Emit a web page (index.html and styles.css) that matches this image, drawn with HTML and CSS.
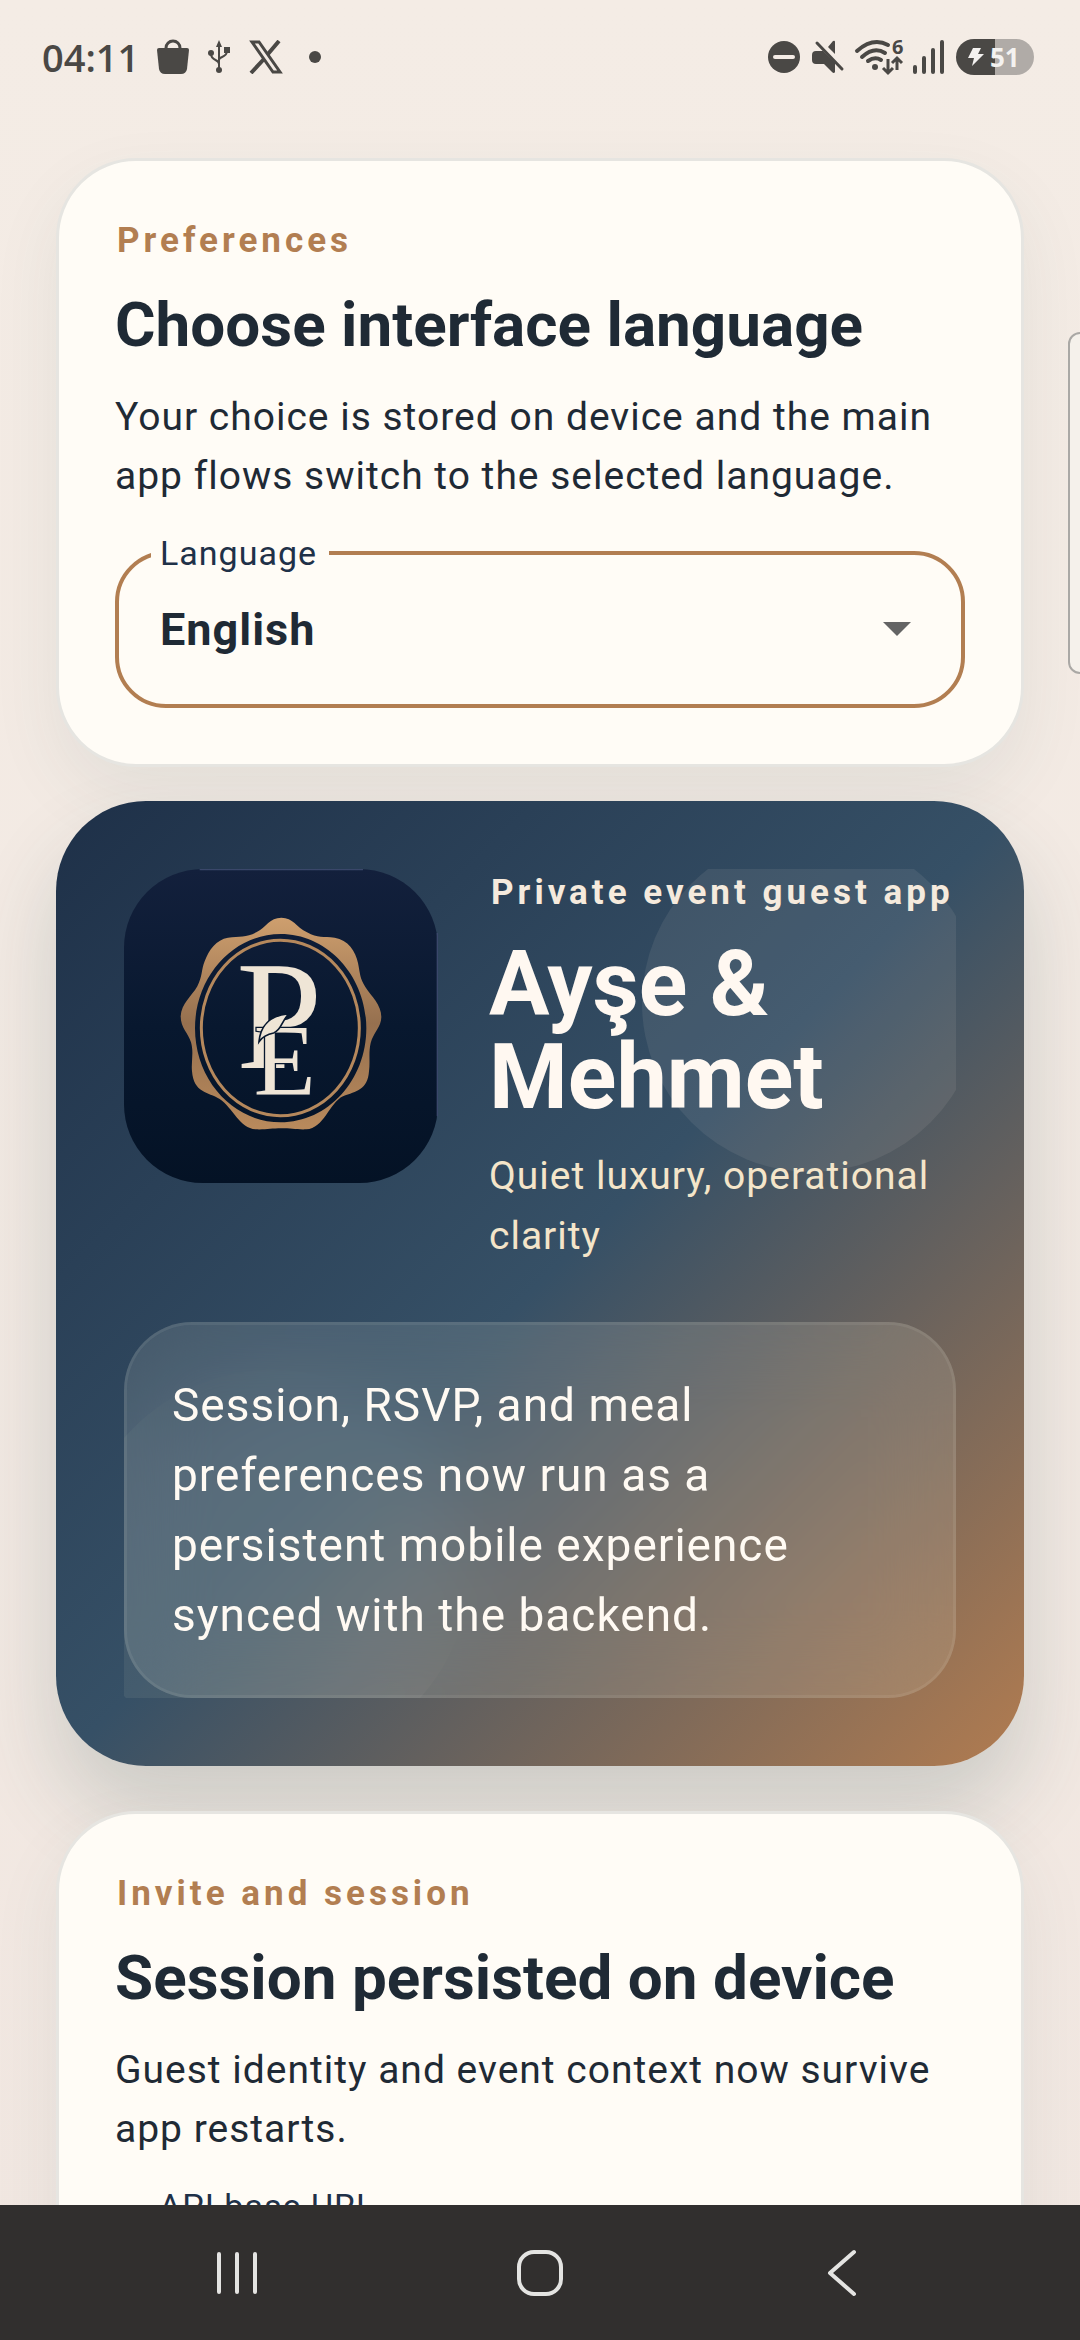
FILE: index.html
```
<!DOCTYPE html>
<html lang="en">
<head>
  <meta charset="UTF-8">
  <meta name="viewport" content="width=device-width, initial-scale=1.0">
  <title>Private event guest app</title>
  <link rel="stylesheet" href="styles.css">
</head>
<body>
  <header class="status-bar">
    <div class="status-left">
      <span class="clock">04:11</span>
      <svg class="icon-bag" width="32" height="36" viewBox="0 0 32 36">
        <path d="M0 11q0-2 2-2h28q2 0 2 2l-2 19q-1 5-6 5H8q-5 0-6-5z" fill="currentColor"/>
        <path d="M9 10V9a7 7 0 0 1 14 0v1" fill="none" stroke="currentColor" stroke-width="3"/>
      </svg>
      <svg class="icon-usb" width="24" height="34" viewBox="0 0 24 34">
        <path d="M12 30V5M12 24c0-5-8-3-8-10M12 20c0-4 8-2 8-9" fill="none" stroke="currentColor" stroke-width="2"/>
        <path d="M12 0l3 7H9zM17 7h6v6h-6z" fill="currentColor"/>
        <circle cx="4" cy="13" r="3" fill="currentColor"/>
        <circle cx="12" cy="30" r="3" fill="currentColor"/>
      </svg>
      <svg class="icon-x" width="34" height="34" viewBox="0 0 34 34" fill="none" stroke="currentColor">
        <path d="M3 2h7l21 30h-7z" stroke-width="3"/>
        <path d="M30 1L19 14M15 19L2 33" stroke-width="4"/>
      </svg>
      <span class="dot"></span>
    </div>
    <div class="status-right">
      <svg width="32" height="32" viewBox="0 0 32 32">
        <circle cx="16" cy="16" r="16" fill="currentColor"/>
        <path d="M7 16h18" stroke="#f4ebe5" stroke-width="4" stroke-linecap="round"/>
      </svg>
      <svg class="icon-mute" width="34" height="34" viewBox="0 0 34 34">
        <path d="M0 15q0-4 4-4h7l12 12v9q-1 2-3 0l-8-8H4q-4 0-4-4zM16 7l5-6q2-1 2 1v12z" fill="currentColor"/>
        <path d="M5 3l25 26" stroke="currentColor" stroke-width="3" stroke-linecap="round"/>
      </svg>
      <svg class="icon-wifi" width="48" height="36" viewBox="0 0 48 36">
        <g fill="none" stroke="currentColor" stroke-width="4" stroke-linecap="round">
          <path d="M2 12Q18-2 33 6M7 18q12-11 23-4M13 22q7-5 13-1"/>
        </g>
        <circle cx="20" cy="28" r="3" fill="currentColor"/>
        <path d="M33 20v13m-5-4l5 5 5-5M42 31V19m-5 5l5-5 5 5" fill="none" stroke="currentColor" stroke-width="3"/>
        <text class="wifi-gen" x="37" y="15">6</text>
      </svg>
      <svg class="icon-signal" width="32" height="34" viewBox="0 0 32 34">
        <path d="M2 27v5M11 18v14M20 10v22M29 2v30" stroke="currentColor" stroke-width="4" stroke-linecap="round"/>
      </svg>
      <span class="battery">
        <svg width="16" height="20" viewBox="0 0 16 20"><path d="M5 1h8l-3 6h6L4 19l2-8H0z" fill="#f4f2f0"/></svg>
        <span>51</span>
      </span>
    </div>
  </header>

  <main class="feed">
    <section class="card">
      <p class="eyebrow">Preferences</p>
      <h2>Choose interface language</h2>
      <p class="text">Your choice is stored on device and the main app flows switch to the selected language.</p>
      <fieldset class="field">
        <legend><label for="language">Language</label></legend>
        <select id="language">
          <option selected>English</option>
          <option>Türkçe</option>
        </select>
        <svg class="caret" width="28" height="14" viewBox="0 0 28 14"><path d="M0 0h28L14 14z" fill="#646464"/></svg>
      </fieldset>
    </section>

    <section class="hero">
      <div class="hero-inner">
        <span class="orb orb-top"></span>
        <span class="orb orb-bottom"></span>
        <div class="hero-head">
          <svg class="logo" viewBox="73 88 942 942" role="img" aria-label="PE">
            <defs>
              <linearGradient id="tile" x1="0" y1="0" x2="0" y2="1">
                <stop offset="0" stop-color="#13203c"/>
                <stop offset=".5" stop-color="#08182f"/>
                <stop offset="1" stop-color="#041225"/>
              </linearGradient>
              <linearGradient id="bronze" x1="0" y1="0" x2="0" y2="1">
                <stop offset="0" stop-color="#ce9f6e"/>
                <stop offset=".5" stop-color="#96704f"/>
                <stop offset="1" stop-color="#b98a5c"/>
              </linearGradient>
            </defs>
            <rect x="73" y="88" width="942" height="942" rx="236" fill="url(#tile)"/>
            <path d="M300 90H790M1013 280V830" stroke="#3a476a" stroke-width="4"/>
            <path fill="url(#bronze)" fill-rule="evenodd" d="M470 278C500 262 510 234 545 234S590 262 622 278C655 296 670 290 705 294C745 300 768 335 775 370C782 405 780 415 797 442C815 470 845 495 845 532C845 562 820 580 813 610C806 640 812 665 808 695C804 750 770 755 730 770C690 788 672 868 620 869C590 870 575 866 545 866S500 870 468 869C420 866 400 805 360 778C325 757 282 760 277 695C274 665 283 640 274 608C266 580 243 565 243 530C245 492 276 470 293 440C308 412 305 390 315 365C328 330 350 300 385 294C420 290 440 294 470 278ZM543 283C401 283 286 410 286 566S401 848 543 848S800 722 800 566S685 283 543 283Z"/>
            <ellipse cx="542" cy="565" rx="237" ry="263" fill="none" stroke="#b5885c" stroke-width="9"/>
            <g class="monogram">
              <text x="410" y="684" font-size="464">P</text>
              <text class="front" x="462" y="767" font-size="304">E</text>
            </g>
            <path d="M478 606C482 560 510 527 568 522C545 545 545 572 522 580C500 584 488 592 478 606Z" fill="#efe5d6" stroke="#08182f" stroke-width="5"/>
          </svg>
          <div class="hero-copy">
            <p class="eyebrow">Private event guest app</p>
            <h1>Ayşe &amp; Mehmet</h1>
            <p class="text">Quiet luxury, operational clarity</p>
          </div>
        </div>
        <p class="note">Session, RSVP, and meal preferences now run as a persistent mobile experience synced with the backend.</p>
      </div>
    </section>

    <section class="card">
      <p class="eyebrow">Invite and session</p>
      <h2>Session persisted on device</h2>
      <p class="text">Guest identity and event context now survive app restarts.</p>
      <fieldset class="field field-idle">
        <legend><label for="api-url">API base URL</label></legend>
        <input id="api-url" type="url">
      </fieldset>
    </section>
  </main>

  <div class="edge-panel"></div>

  <nav class="nav-bar">
    <button type="button" aria-label="Recent apps">
      <svg width="48" height="48" viewBox="0 0 48 48"><path d="M5 5v38M23 5v38M41 5v38"/></svg>
    </button>
    <button type="button" aria-label="Home">
      <svg width="48" height="48" viewBox="0 0 48 48"><rect x="3" y="3" width="42" height="42" rx="15"/></svg>
    </button>
    <button type="button" aria-label="Back">
      <svg width="48" height="48" viewBox="0 0 48 48"><path d="M36 3L12 24l24 21"/></svg>
    </button>
  </nav>
</body>
</html>
```
FILE: styles.css
```
* { box-sizing: border-box; }
body {
  margin: 0;
  height: 100vh;
  display: flex;
  flex-direction: column;
  overflow: hidden;
  font-family: Roboto, "Noto Sans", sans-serif;
  color: #1f2a35;
  background: linear-gradient(#f4ece5, #f1e7e1);
}
h1, h2, p { margin: 0; }

/* status bar */
.status-bar {
  flex: none;
  height: 114px;
  padding: 0 46px 0 42px;
  display: flex;
  justify-content: space-between;
  align-items: center;
  color: #4a4845;
}
.status-left, .status-right { display: flex; align-items: center; }
.clock { font: 600 38px/52px "Open Sans", sans-serif; }
.icon-bag { margin-left: 18px; }
.icon-usb { margin-left: 18px; }
.icon-x { margin-left: 18px; }
.dot { width: 12px; height: 12px; margin-left: 26px; border-radius: 50%; background: currentColor; }
.icon-mute { margin-left: 12px; }
.icon-wifi { margin-left: 9px; overflow: visible; }
.icon-signal { margin-left: 10px; }
.wifi-gen { font: 700 20px "Open Sans", sans-serif; fill: currentColor; }
.battery {
  width: 78px;
  height: 36px;
  margin-left: 11px;
  padding-left: 12px;
  display: flex;
  align-items: center;
  gap: 6px;
  border-radius: 18px;
  background: linear-gradient(90deg, #4a4845 50%, #b0aba7 50%);
  color: #f4f2f0;
  font: 700 26px/36px "Open Sans", sans-serif;
}

/* feed */
.feed {
  flex: 1;
  min-height: 0;
  overflow: hidden;
  padding: 44px 56px 0;
}
.card {
  border: 3px solid #e6e5e1;
  border-radius: 80px;
  padding: 56px;
  background: #fffcf6;
  box-shadow: 0 28px 68px rgba(50, 90, 90, .08);
}
.eyebrow { padding-left: 2px; font-size: 35px; line-height: 48px; font-weight: 700; letter-spacing: 4px; color: #b27e51; }
h2 { margin: 22px 0 25px; font-size: 62px; line-height: 76px; font-weight: 700; }
.text { font-size: 39px; line-height: 59px; letter-spacing: 1px; }

.field {
  display: grid;
  margin: 27px 0 0;
  padding: 0 0 19px;
  border: 4px solid #b27e51;
  border-radius: 51px;
}
.field legend {
  margin-left: 32px;
  padding: 0 12px 0 9px;
  font-size: 34px;
  line-height: 40px;
  letter-spacing: 1px;
  color: #1f3148;
}
.field select, .field input {
  grid-area: 1 / 1;
  width: 100%;
  height: 112px;
  padding: 0 90px 0 41px;
  appearance: none;
  border: 0;
  outline: 0;
  background: none;
  font: 700 45px/53px Roboto, sans-serif;
  letter-spacing: 1px;
  color: #1f2a35;
}
.caret { grid-area: 1 / 1; align-self: center; justify-self: end; margin-right: 50px; pointer-events: none; }
.field-idle { border: 3px solid #e2ddd6; }

.hero {
  margin: 34px 0 45px;
  padding: 68px;
  border-radius: 90px;
  background: linear-gradient(135deg, #1e3048, #365066 50%, #b27c50);
  box-shadow: 0 46px 84px rgba(40, 80, 80, .19);
}
.hero-inner { position: relative; overflow: hidden; }
/* faint circles behind the content, cut off by the inner box */
.orb { position: absolute; border-radius: 50%; background: rgba(255, 248, 225, .08); }
.orb-top { top: -35px; right: -24px; width: 338px; height: 338px; }
.orb-bottom { bottom: -66px; left: -48px; width: 394px; height: 394px; background: rgba(255, 248, 225, .07); }
.hero-head { position: relative; display: flex; align-items: flex-start; gap: 51px; }
.logo { flex: none; width: 314px; height: 314px; }
.monogram { font-family: "Liberation Serif", serif; fill: #efe5d6; }
.monogram .front { stroke: #08182f; stroke-width: 8px; paint-order: stroke; }
.hero-copy { flex: 1; min-width: 0; }
.hero-copy .eyebrow { color: #f5eadd; }
h1 { margin: 21px 0 22px; font-size: 90px; line-height: 93px; font-weight: 700; color: #fff8f1; }
.hero-copy .text { line-height: 60px; color: #f4e5c9; }
.note {
  position: relative;
  margin-top: 56px;
  padding: 45px;
  border: 3px solid rgba(255, 255, 240, .18);
  border-radius: 68px;
  background: rgba(255, 255, 240, .12);
  background-clip: padding-box;
  backdrop-filter: blur(40px);
  font-size: 46px;
  line-height: 70px;
  letter-spacing: 1px;
  color: #fffaf3;
}

/* system overlays */
.edge-panel {
  position: absolute;
  top: 332px;
  right: -12px;
  width: 24px;
  height: 342px;
  border: 2px solid #aaa8a5;
  border-radius: 12px;
  background: #f5f1eb;
}
.nav-bar {
  flex: none;
  height: 135px;
  padding: 0 87px;
  display: grid;
  grid-template-columns: repeat(3, 1fr);
  background: #312f2e;
}
.nav-bar button { display: grid; place-items: center; border: 0; padding: 0; background: none; }
.nav-bar svg { fill: none; stroke: #e4e4e2; stroke-width: 4px; stroke-linecap: round; stroke-linejoin: round; }
```
